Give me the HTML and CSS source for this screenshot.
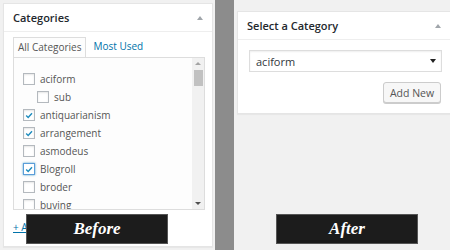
FILE: index.html
```html
<!DOCTYPE html>
<html lang="en">
<head>
    <meta charset="UTF-8">
    <title>Categories - Before / After</title>
    <link rel="stylesheet" href="styles.css">
</head>
<body>

<div class="page">

    <!-- Before: checklist metabox -->
    <div class="col col-before">
        <div class="postbox postbox-tall">
            <div class="hndle">
                <h2>Categories</h2>
                <span class="toggle"></span>
            </div>
            <div class="inside">
                <ul class="tabs">
                    <li class="active">All Categories</li>
                    <li><a href="#">Most Used</a></li>
                </ul>
                <div class="tabs-panel">
                    <ul class="checklist">
                        <li><span class="cb"></span>aciform</li>
                        <li class="child"><span class="cb"></span>sub</li>
                        <li><span class="cb checked"><svg viewBox="0 0 12 12"><path d="M2.6 6.1 L5 8.4 L9.6 3.2"/></svg></span>antiquarianism</li>
                        <li><span class="cb checked"><svg viewBox="0 0 12 12"><path d="M2.6 6.1 L5 8.4 L9.6 3.2"/></svg></span>arrangement</li>
                        <li><span class="cb"></span>asmodeus</li>
                        <li><span class="cb checked focus"><svg viewBox="0 0 12 12"><path d="M2.6 6.1 L5 8.4 L9.6 3.2"/></svg></span>Blogroll</li>
                        <li><span class="cb"></span>broder</li>
                        <li><span class="cb"></span>buying</li>
                    </ul>
                    <div class="scrollbar">
                        <span class="arrow up"></span>
                        <span class="thumb"></span>
                        <span class="track"></span>
                        <span class="arrow down"></span>
                    </div>
                </div>
                <a class="add-new" href="#">+ Add New Category</a>
            </div>
        </div>
        <div class="label label-before">Before</div>
    </div>

    <div class="divider"></div>

    <!-- After: dropdown metabox -->
    <div class="col col-after">
        <div class="postbox">
            <div class="hndle">
                <h2>Select a Category</h2>
                <span class="toggle"></span>
            </div>
            <div class="inside inside-after">
                <div class="select">
                    <span>aciform</span>
                    <span class="caret"></span>
                </div>
                <div class="actions">
                    <button type="button">Add New</button>
                </div>
            </div>
        </div>
        <div class="label label-after">After</div>
    </div>

</div>

</body>
</html>
```

FILE: styles.css
```css
* {
    box-sizing: border-box;
}

body {
    margin: 0;
    background-color: #f1f1f1;
    font-family: 'Open Sans', 'Liberation Sans', sans-serif;
    font-size: 11px;
    color: #555;
    overflow: hidden;
}

.page {
    display: flex;
    height: 250px;
}

.col {
    position: relative;
}

.col-before {
    width: 215px;
    padding: 3px 2px 0 3px;
}

.col-after {
    flex: 1;
    padding: 11px 0 0 3px;
}

.divider {
    width: 19px;
    background-color: #8c8c8c;
}

/* metabox */

.postbox {
    background: #fff;
    border: 1px solid #e5e5e5;
    box-shadow: 0 1px 1px rgba(0,0,0,0.04);
    border-right: none;
}

.col-before .postbox {
    border-right: 1px solid #e5e5e5;
}

.postbox-tall {
    height: 244px;
}

.hndle {
    display: flex;
    align-items: center;
    justify-content: space-between;
    height: 28px;
    padding: 0 9px 0 9px;
    border-bottom: 1px solid #eee;
}

.hndle h2 {
    margin: 0;
    font-size: 11px;
    font-weight: 600;
    color: #23282d;
}

.toggle {
    width: 0;
    height: 0;
    border-left: 3px solid transparent;
    border-right: 3px solid transparent;
    border-bottom: 4px solid #a0a5aa;
}

.inside {
    padding: 5px 7px 0 9px;
    font-size: 10px;
}

/* tabs */

.tabs {
    display: flex;
    list-style: none;
    margin: 0;
    padding: 0;
}

.tabs li {
    height: 20px;
    line-height: 19px;
    padding: 0 4px;
}

.tabs li.active {
    border: 1px solid #ddd;
    border-bottom: none;
    background: #fdfdfd;
    color: #555;
}

.tabs a {
    color: #0073aa;
    text-decoration: none;
    margin-left: 3px;
}

.tabs-panel {
    display: flex;
    height: 153px;
    border: 1px solid #ddd;
    background: #fdfdfd;
    overflow: hidden;
}

.checklist {
    flex: 1;
    list-style: none;
    margin: 0;
    padding: 12px 0 0 9px;
}

.checklist li {
    display: flex;
    align-items: center;
    height: 18px;
    white-space: nowrap;
}

.checklist li.child {
    padding-left: 14px;
}

.cb {
    display: flex;
    align-items: center;
    justify-content: center;
    width: 12px;
    height: 12px;
    margin-right: 5px;
    border: 1px solid #b4b9be;
    background: #fff;
    box-shadow: inset 0 1px 2px rgba(0,0,0,0.1);
}

.cb.focus {
    border-color: #5b9dd9;
    box-shadow: 0 0 2px rgba(30,140,190,0.8);
}

.cb svg {
    width: 11px;
    height: 11px;
    fill: none;
    stroke: #1e8cbe;
    stroke-width: 1.7;
}

/* fake scrollbar */

.scrollbar {
    display: flex;
    flex-direction: column;
    align-items: center;
    width: 12px;
    background: #f1f1f1;
    padding: 4px 0 4px 0;
}

.arrow {
    width: 0;
    height: 0;
    border-left: 3px solid transparent;
    border-right: 3px solid transparent;
}

.arrow.up {
    border-bottom: 3px solid #a3a3a3;
}

.arrow.down {
    border-top: 3px solid #505050;
}

.thumb {
    width: 9px;
    height: 16px;
    margin-top: 5px;
    background: #c1c1c1;
}

.track {
    flex: 1;
}

.add-new {
    display: inline-block;
    margin-top: 10px;
    color: #0073aa;
    text-decoration: underline;
}

/* after box */

.inside-after {
    padding: 10px 8px 10px 11px;
    font-size: 11px;
}

.select {
    display: flex;
    align-items: center;
    justify-content: space-between;
    height: 22px;
    padding: 0 5px 0 6px;
    border: 1px solid #ddd;
    box-shadow: inset 0 1px 2px rgba(0,0,0,0.07);
    color: #32373c;
}

.caret {
    width: 0;
    height: 0;
    border-left: 3px solid transparent;
    border-right: 3px solid transparent;
    border-top: 4px solid #222;
}

.actions {
    display: flex;
    justify-content: flex-end;
    margin-top: 10px;
    padding-right: 1px;
}

button {
    width: 58px;
    height: 21px;
    padding: 0;
    border: 1px solid #ccc;
    border-radius: 3px;
    background: #f7f7f7;
    box-shadow: 0 1px 0 #ccc;
    font-family: 'Open Sans', 'Liberation Sans', sans-serif;
    font-size: 10.5px;
    color: #555;
}

/* overlay labels */

.label {
    position: absolute;
    top: 214px;
    width: 142px;
    height: 30px;
    display: flex;
    align-items: center;
    justify-content: center;
    background: #1c1c1c;
    border: 1px solid #555;
    color: #fff;
    font-family: 'Liberation Serif', serif;
    font-style: italic;
    font-weight: bold;
    font-size: 17px;
}

.label-before {
    left: 26px;
}

.label-after {
    left: 42px;
}
```
